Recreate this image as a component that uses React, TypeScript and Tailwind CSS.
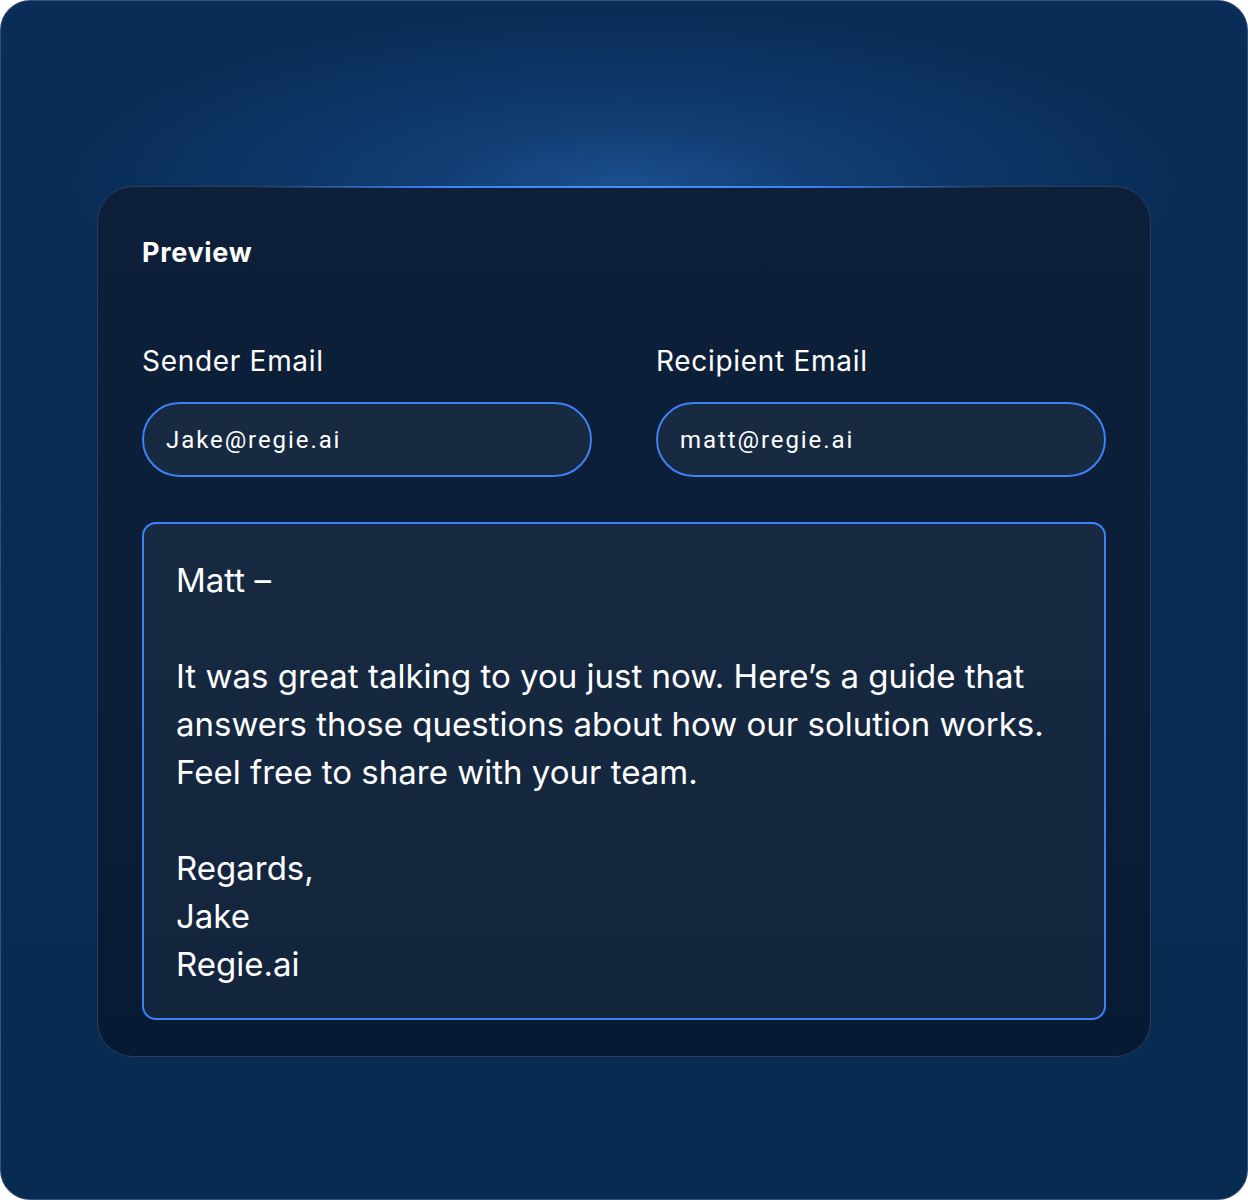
const BODY_LINES = [
  'Matt –',
  '',
  'It was great talking to you just now. Here’s a guide that',
  'answers those questions about how our solution works.',
  'Feel free to share with your team.',
  '',
  'Regards,',
  'Jake',
  'Regie.ai',
];

function EmailField({ label, value }: { label: string; value: string }) {
  return (
    <div className="flex flex-col">
      <label className="text-[28px] leading-[40px] text-white tracking-[0.025em] font-['Inter',sans-serif]">{label}</label>
      <div className="mt-[21px] h-[75px] rounded-full border-2 border-[#3b82f6] bg-[#172a41] flex items-center px-[22px]">
        <span className="text-[24px] text-white tracking-[0.08em] font-['Roboto',sans-serif]">{value}</span>
      </div>
    </div>
  );
}

export default function App() {
  return (
    <div className="w-[1248px] h-[1200px] bg-white">
      <div className="relative w-[1248px] h-[1200px] rounded-[30px] overflow-hidden border border-[#34507a] bg-[radial-gradient(ellipse_560px_175px_at_50%_186px,#1b4f8f_0%,rgba(22,72,134,0.6)_35%,rgba(8,44,84,0)_100%),linear-gradient(180deg,#0a2d57_0%,#082b52_100%)] pt-[185px] px-[96px]">
        <div className="relative h-[871px] rounded-[36px] border border-[#2a3d58] bg-[linear-gradient(180deg,#0e2039_0%,#0b1e37_60%,#061a33_100%)] px-[44px] pt-[48px] font-['Inter',sans-serif]">
          <div className="absolute left-[150px] right-[150px] top-[-1px] h-[2px] bg-[linear-gradient(90deg,rgba(59,130,246,0)_0%,#3b82f6_25%,#4a8ff7_50%,#3b82f6_75%,rgba(59,130,246,0)_100%)]" />
          <h2 className="text-[27px] leading-[36px] font-bold text-white tracking-[0.025em]">Preview</h2>
          <div className="mt-[70px] grid grid-cols-2 gap-x-[64px]">
            <EmailField label="Sender Email" value="Jake@regie.ai" />
            <EmailField label="Recipient Email" value="matt@regie.ai" />
          </div>
          <div className="mt-[45px] h-[498px] rounded-[14px] border-2 border-[#3b82f6] bg-[linear-gradient(180deg,#172a42_0%,#13253d_100%)] px-[32px] pt-[32px]">
            {BODY_LINES.map((line, i) => (
              <p key={i} className="text-[33px] leading-[48px] text-white h-[48px]">
                {line}
              </p>
            ))}
          </div>
        </div>
      </div>
    </div>
  );
}
